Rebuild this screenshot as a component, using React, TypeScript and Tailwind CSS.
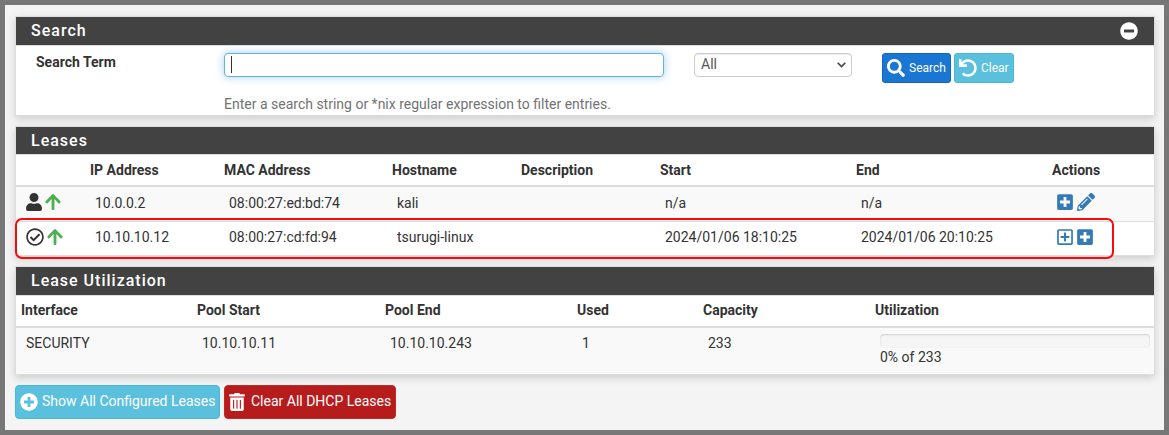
import type { ReactNode } from "react";
import {
  FaArrowUp,
  FaMinusCircle,
  FaPencilAlt,
  FaPlusCircle,
  FaPlusSquare,
  FaRegCheckCircle,
  FaRegPlusSquare,
  FaSearch,
  FaTrashAlt,
  FaUndo,
  FaUser,
} from "react-icons/fa";

const leaseColumns = ["", "IP Address", "MAC Address", "Hostname", "Description", "Start", "End", "Actions"];

const leases = [
  { ip: "10.0.0.2", mac: "08:00:27:ed:bd:74", host: "kali", start: "n/a", end: "n/a", isStatic: true },
  {
    ip: "10.10.10.12",
    mac: "08:00:27:cd:fd:94",
    host: "tsurugi-linux",
    start: "2024/01/06 18:10:25",
    end: "2024/01/06 20:10:25",
    isStatic: false,
  },
];

const poolColumns = ["Interface", "Pool Start", "Pool End", "Used", "Capacity", "Utilization"];

const leaseGrid = "grid grid-cols-[69px_134px_168px_129px_139px_196px_196px_107px]";
const poolGrid = "grid grid-cols-[176px_188px_192px_126px_172px_284px]";

function Panel({ title, headerClass, action, children }: { title: string; headerClass: string; action?: ReactNode; children: ReactNode }) {
  return (
    <section className="border border-[#ddd] bg-white shadow-[0_3px_8px_rgba(0,0,0,0.16)]">
      <header className={`flex items-center justify-between border-b border-[#ddd] bg-[#424242] pl-[15px] pr-4 text-white ${headerClass}`}>
        <h2 className="text-[16px] leading-[18px] font-medium tracking-[1px]">{title}</h2>
        {action}
      </header>
      {children}
    </section>
  );
}

function HeadRow({ columns, grid }: { columns: string[]; grid: string }) {
  return (
    <div className={`${grid} border-b-2 border-[#ddd] leading-5 font-bold`}>
      {columns.map((c) => (
        <span key={c} className="pl-[5px]">{c}</span>
      ))}
    </div>
  );
}

export default function App() {
  return (
    <main className="h-[435px] w-[1169px] border-[5px] border-[#777] bg-[#f4f4f4] px-2.5 pt-[11px] font-[Roboto,sans-serif] text-[14px] text-[#333]">
      <div className="flex w-[1140px] flex-col gap-2.5">
        <Panel title="Search" headerClass="h-[29px]" action={<FaMinusCircle className="size-[18px]" />}>
          <div className="flex h-[69px] items-start pt-[7px]">
            <label className="-mt-px w-[208px] pl-5 leading-5 font-bold">Search Term</label>
            <div className="w-[470px]">
              <div className="flex h-6 w-[440px] items-center rounded border border-[#66afe9] bg-white pl-1.5 shadow-[0_0_8px_rgba(102,175,233,0.6)]">
                <span className="mb-px h-[17px] w-px bg-[#333]" />
              </div>
              <p className="mt-[17px] leading-5 text-[#737373]">Enter a search string or *nix regular expression to filter entries.</p>
            </div>
            <div className="flex h-6 w-[158px] items-center justify-between rounded border border-[#ccc] pr-[5px] pl-1.5 text-[#555] shadow-[inset_0_1px_1px_rgba(0,0,0,0.075)]">
              <span className="pb-0.5 leading-5">All</span>
              <svg className="h-[6px] w-[9px]" viewBox="0 0 9 6" fill="none" stroke="#444" strokeWidth="1.6">
                <path d="M.7 .8 4.5 4.6 8.3 .8" />
              </svg>
            </div>
            <button className="ml-[30px] flex h-[30px] w-[69px] items-center gap-1 rounded-[3px] border border-[#1565c0] bg-[#1976d2] pl-1 text-[12px] text-white">
              <FaSearch className="size-[18px]" />
              Search
            </button>
            <button className="ml-[3px] flex h-[30px] w-[60px] items-center gap-1 rounded-[3px] border border-[#46b8da] bg-[#5bc0de] pl-1 text-[12px] text-white">
              <FaUndo className="size-[18px]" />
              Clear
            </button>
          </div>
        </Panel>

        <Panel title="Leases" headerClass="h-[28px]">
          <HeadRow columns={leaseColumns} grid={`${leaseGrid} h-[32px] pt-[5px]`} />
          <div className="relative">
            {leases.map((l) => (
              <div
                key={l.ip}
                className={`${leaseGrid} h-[34px] items-start leading-5 *:pl-2.5 ${l.isStatic ? "bg-[#f9f9f9] pt-[6px]" : "border-t border-[#ddd] pt-[5px]"}`}
              >
                <div className={`flex h-[18px] items-center gap-[3px] ${l.isStatic ? "" : "mt-px"}`}>
                  {l.isStatic ? <FaUser className="h-[18px] w-4" /> : <FaRegCheckCircle className="size-[18px]" />}
                  <FaArrowUp className="h-[18px] w-4 text-[#4caf50]" />
                </div>
                <span>{l.ip}</span>
                <span>{l.mac}</span>
                <span>{l.host}</span>
                <span />
                <span>{l.start}</span>
                <span>{l.end}</span>
                <div className={`flex h-[18px] items-center gap-[3.5px] text-[#337ab7] ${l.isStatic ? "" : "mt-px"}`}>
                  {l.isStatic ? <FaPlusSquare className="h-[18px] w-4" /> : <FaRegPlusSquare className="h-[18px] w-4" />}
                  {l.isStatic ? <FaPencilAlt className="size-[18px]" /> : <FaPlusSquare className="h-[18px] w-4" />}
                </div>
              </div>
            ))}
            <div className="absolute top-[31px] -left-px h-[41px] w-[1099px] rounded-[7px] border-2 border-[#ff0808]" />
          </div>
        </Panel>

        <Panel title="Lease Utilization" headerClass="h-[29px]">
          <HeadRow columns={poolColumns} grid={`${poolGrid} h-[32px] pt-1`} />
          <div className={`${poolGrid} h-[46px] bg-[#f9f9f9] pt-[5px] leading-5 *:pl-2.5`}>
            <span>SECURITY</span>
            <span>10.10.10.11</span>
            <span>10.10.10.243</span>
            <span>1</span>
            <span>233</span>
            <div className="pt-px pr-1">
              <div className="h-3.5 rounded bg-[#f5f5f5] shadow-[inset_0_1px_2px_rgba(0,0,0,0.15)]" />
              <div className="leading-[18px]">0% of 233</div>
            </div>
          </div>
        </Panel>

        <div className="flex gap-1">
          <button className="flex h-[34px] w-[205px] items-center gap-1 rounded border border-[#46b8da] bg-[#5bc0de] pl-1 text-white">
            <FaPlusCircle className="size-[18px]" />
            <span className="pb-0.5 whitespace-nowrap">Show All Configured Leases</span>
          </button>
          <button className="flex h-[34px] w-[172px] items-center gap-1.5 rounded border border-[#c62828] bg-[#b71c1c] pl-1 text-white">
            <FaTrashAlt className="h-[18px] w-4" />
            <span className="pb-0.5 whitespace-nowrap">Clear All DHCP Leases</span>
          </button>
        </div>
      </div>
    </main>
  );
}
